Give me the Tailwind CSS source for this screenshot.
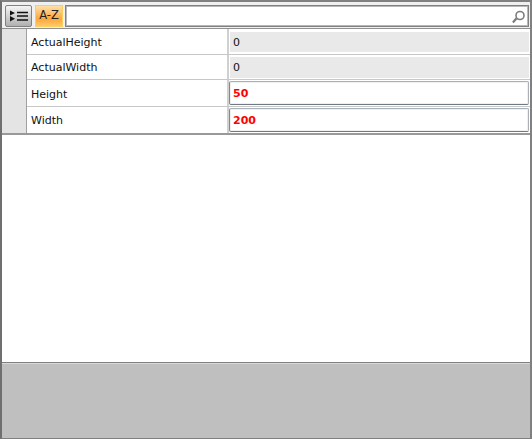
<!DOCTYPE html>
<html lang="en">
  <head>
    <meta charset="UTF-8">
    <title>Property Grid</title>
    <script src="https://cdn.jsdelivr.net/npm/@tailwindcss/browser@4"></script>
  </head>
  <body class="w-[532px] h-[439px] overflow-hidden bg-white text-[11px] text-[#111] font-['DejaVu_Sans',sans-serif]">
    <div class="h-full flex flex-col border-t-2 border-l-2 border-r-2 border-b border-t-[#808080] border-l-[#6f6f6f] border-r-[#808080] border-b-[#808080]">

      <!-- toolbar -->
      <div class="h-[27px] flex items-start pt-[3px] pl-[3px] pr-[1px] bg-[#f0f0f0] border-b border-[#8f8f8f]">
        <button class="w-[27px] h-[22px] flex items-center justify-center rounded-[2px] border border-[#808080] bg-gradient-to-b from-[#f5f5f5] to-[#b0b0b0]">
          <svg width="20" height="12" viewBox="0 0 20 12">
            <path d="M1 0.5l5 2.5-5 2.5zM1 6l5 2.7-5 2.8z" fill="#111"/>
            <path d="M8 2.5h11M8 6h11M8 10h11" stroke="#111" stroke-width="1.5"/>
          </svg>
        </button>
        <button class="ml-[3px] w-[28px] h-[22px] flex items-center justify-center border border-[#f8d060] bg-[linear-gradient(#fde0a8,#ffa53a_65%,#ffc96a)] text-[11.5px] text-[#222]">A-Z</button>
        <div class="ml-[2px] flex-1 h-[22px] flex items-center justify-end bg-white border border-[#808080] shadow-[inset_0_0_0_1px_#b8b8b8]">
          <svg width="15" height="15" viewBox="0 0 15 15" fill="none" stroke="#7c7c7c" class="mr-[1px]">
            <circle cx="8" cy="6.5" r="4" stroke-width="1.6"/>
            <path d="M4.6 9.3L0.9 13.5" stroke-width="2.2"/>
          </svg>
        </div>
      </div>

      <!-- property rows -->
      <div class="flex border-b-2 border-[#999999]">
        <div class="w-[25px] shrink-0 bg-[#e4e4e4] border-r border-[#a0a0a0]"></div>
        <div class="flex-1 flex flex-col">
          <div class="h-[26px] flex border-b border-[#c8c8c8]">
            <div class="w-[202px] pl-[4px] pt-[4px] flex items-center border-r-2 border-[#d0d0d0]">ActualHeight</div>
            <div class="flex-1 pt-[3px] pb-[2px] pl-[1px] pr-[1px]"><div class="h-full pl-[3px] pt-[3px] flex items-center bg-[#e9e9e9]">0</div></div>
          </div>
          <div class="h-[25px] flex border-b border-[#c8c8c8]">
            <div class="w-[202px] pl-[4px] pt-[2px] flex items-center border-r-2 border-[#d0d0d0]">ActualWidth</div>
            <div class="flex-1 pt-[2px] pb-[1px] pl-[1px] pr-[1px]"><div class="h-full pl-[3px] pt-[1px] flex items-center bg-[#e9e9e9]">0</div></div>
          </div>
          <div class="h-[27px] flex border-b border-[#c8c8c8]">
            <div class="w-[202px] pl-[4px] pt-[4px] flex items-center border-r-2 border-[#d0d0d0]">Height</div>
            <div class="flex-1 py-[1px] pr-[1px]"><div class="h-full pl-[3px] pt-[3px] flex items-center rounded-[2px] border border-[#a9b0b8] border-b-[#6f7a85] border-l-[#7d8892] shadow-[inset_0_0_0_1px_#eef0f2] font-bold text-[#ff0000]">50</div></div>
          </div>
          <div class="h-[26px] flex">
            <div class="w-[202px] pl-[4px] pt-[3px] flex items-center border-r-2 border-[#d0d0d0]">Width</div>
            <div class="flex-1 py-[1px] pr-[1px]"><div class="h-full pl-[3px] pt-[3px] flex items-center rounded-[2px] border border-[#a9b0b8] border-b-[#6f7a85] border-l-[#7d8892] shadow-[inset_0_0_0_1px_#eef0f2] font-bold text-[#ff0000]">200</div></div>
          </div>
        </div>
      </div>

      <!-- empty area -->
      <div class="flex-1 bg-white"></div>

      <!-- description panel -->
      <div class="h-[76px] bg-[#bfbfbf] border-t border-[#808080] shadow-[inset_0_1px_0_#d8d8d8]"></div>
    </div>
  </body>
</html>
